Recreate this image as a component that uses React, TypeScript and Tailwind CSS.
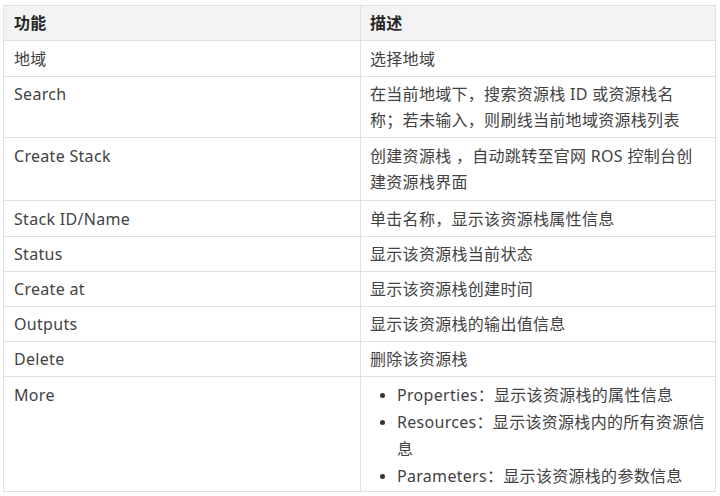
const rows: { name: string; desc: React.ReactNode; pad: string }[] = [
  { name: "地域", desc: "选择地域", pad: "pt-[5px] pb-1" },
  {
    name: "Search",
    desc: (
      <>
        在当前地域下，搜索资源栈 ID 或资源栈名
        <br />
        称；若未输入，则刷线当前地域资源栈列表
      </>
    ),
    pad: "py-1",
  },
  {
    name: "Create Stack",
    desc: (
      <>
        创建资源栈 ，自动跳转至官网 ROS 控制台创
        <br />
        建资源栈界面
      </>
    ),
    pad: "pt-[5px] pb-[5px]",
  },
  { name: "Stack ID/Name", desc: "单击名称，显示该资源栈属性信息", pad: "pt-[5px] pb-1" },
  { name: "Status", desc: "显示该资源栈当前状态", pad: "py-1" },
  { name: "Create at", desc: "显示该资源栈创建时间", pad: "py-1" },
  { name: "Outputs", desc: "显示该资源栈的输出值信息", pad: "py-1" },
  { name: "Delete", desc: "删除该资源栈", pad: "py-1" },
];

const moreItems: React.ReactNode[] = [
  "Properties：显示该资源栈的属性信息",
  <>
    Resources：显示该资源栈内的所有资源信
    <br />息
  </>,
  "Parameters：显示该资源栈的参数信息",
];

const App = () => {
  return (
    <div
      className="w-[720px] h-[496px] bg-white pt-[5px] pl-[3px] text-[16px] tracking-[0.3px] text-[#424242]"
      style={{ fontFamily: '"Noto Sans", "Noto Sans CJK SC", sans-serif' }}
    >
      <table className="w-[713px] border-collapse table-fixed">
        <colgroup>
          <col className="w-[357px]" />
          <col />
        </colgroup>
        <thead>
          <tr className="bg-[#f3f3f3]">
            <th className="border border-[#e0e0e0] px-[10px] py-1 text-left font-bold leading-[26px] text-[#262626]">
              功能
            </th>
            <th className="border border-[#e0e0e0] px-[9px] py-1 text-left font-bold leading-[26px] text-[#262626]">
              描述
            </th>
          </tr>
        </thead>
        <tbody>
          {rows.map((r) => (
            <tr key={r.name}>
              <td className={`border border-[#e0e0e0] px-[10px] align-top leading-[26px] ${r.pad}`}>
                {r.name}
              </td>
              <td className={`border border-[#e0e0e0] px-[9px] align-top leading-[26px] ${r.pad}`}>
                {r.desc}
              </td>
            </tr>
          ))}
          <tr>
            <td className="border border-[#e0e0e0] px-[10px] pt-[5px] pb-[1px] align-top leading-[26px]">
              More
            </td>
            <td className="border border-[#e0e0e0] px-[9px] pt-[5px] pb-[1px] align-top">
              <ul>
                {moreItems.map((item, i) => (
                  <li key={i} className="flex leading-[27px]">
                    <span className="w-[27px] shrink-0 flex justify-end pr-[12px] pt-[11px]">
                      <span className="block w-[5px] h-[5px] rounded-full bg-[#333]" />
                    </span>
                    <span>{item}</span>
                  </li>
                ))}
              </ul>
            </td>
          </tr>
        </tbody>
      </table>
    </div>
  );
};

export default App;
